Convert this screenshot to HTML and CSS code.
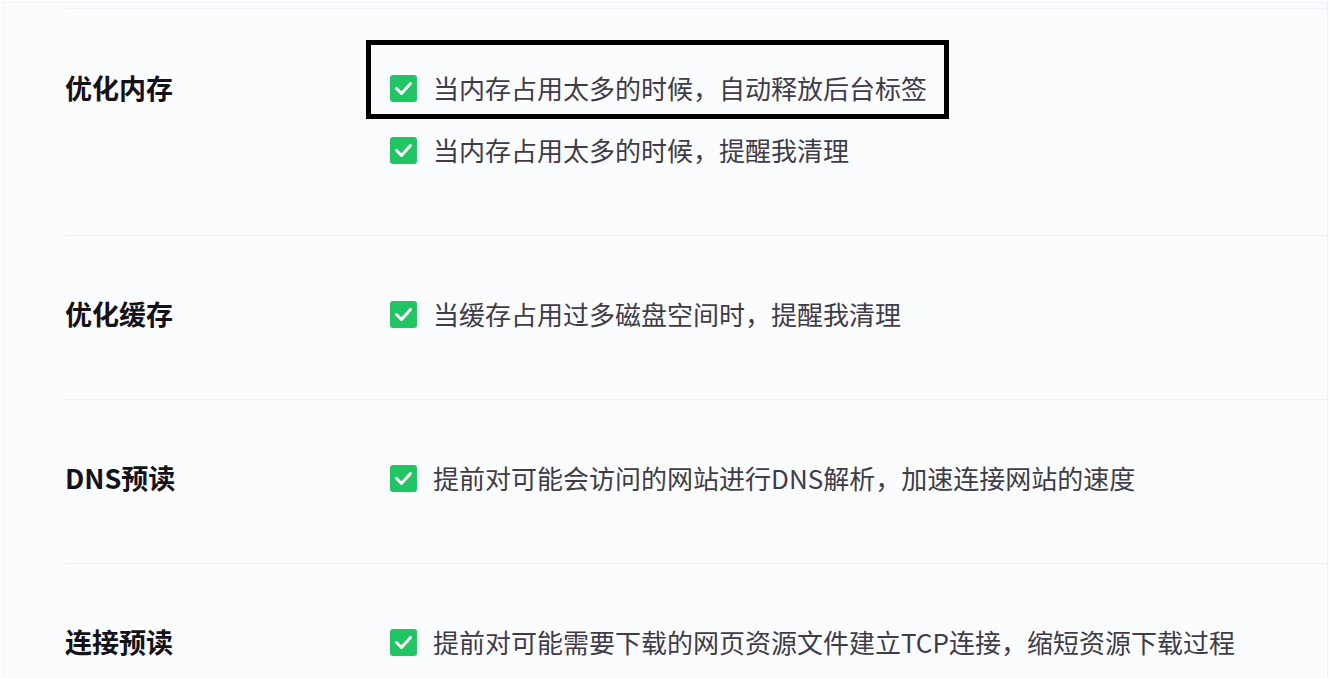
FILE: index.html
```html
<!DOCTYPE html>
<html lang="zh-CN">
<head>
<meta charset="utf-8">
<title>设置</title>
<link rel="stylesheet" href="styles.css">
</head>
<body>
<div class="card">
  <section class="group first">
    <div class="label">优化内存</div>
    <div class="items">
      <div class="item">
        <span class="box-mark"></span>
        <span class="check"><svg viewBox="0 0 27 27" width="27" height="27"><polyline points="6.5,13.5 11.5,18.5 20.5,8.5" fill="none" stroke="#fff" stroke-width="3" stroke-linecap="round" stroke-linejoin="round"/></svg></span>
        <span class="text">当内存占用太多的时候，自动释放后台标签</span>
      </div>
      <div class="item">
        <span class="check"><svg viewBox="0 0 27 27" width="27" height="27"><polyline points="6.5,13.5 11.5,18.5 20.5,8.5" fill="none" stroke="#fff" stroke-width="3" stroke-linecap="round" stroke-linejoin="round"/></svg></span>
        <span class="text">当内存占用太多的时候，提醒我清理</span>
      </div>
    </div>
  </section>
  <section class="group">
    <div class="label">优化缓存</div>
    <div class="items">
      <div class="item">
        <span class="check"><svg viewBox="0 0 27 27" width="27" height="27"><polyline points="6.5,13.5 11.5,18.5 20.5,8.5" fill="none" stroke="#fff" stroke-width="3" stroke-linecap="round" stroke-linejoin="round"/></svg></span>
        <span class="text">当缓存占用过多磁盘空间时，提醒我清理</span>
      </div>
    </div>
  </section>
  <section class="group">
    <div class="label">DNS预读</div>
    <div class="items">
      <div class="item">
        <span class="check"><svg viewBox="0 0 27 27" width="27" height="27"><polyline points="6.5,13.5 11.5,18.5 20.5,8.5" fill="none" stroke="#fff" stroke-width="3" stroke-linecap="round" stroke-linejoin="round"/></svg></span>
        <span class="text">提前对可能会访问的网站进行DNS解析，加速连接网站的速度</span>
      </div>
    </div>
  </section>
  <section class="group">
    <div class="label">连接预读</div>
    <div class="items">
      <div class="item">
        <span class="check"><svg viewBox="0 0 27 27" width="27" height="27"><polyline points="6.5,13.5 11.5,18.5 20.5,8.5" fill="none" stroke="#fff" stroke-width="3" stroke-linecap="round" stroke-linejoin="round"/></svg></span>
        <span class="text">提前对可能需要下载的网页资源文件建立TCP连接，缩短资源下载过程</span>
      </div>
    </div>
  </section>
</div>
</body>
</html>
```

FILE: styles.css
```css
html, body {
  margin: 0;
  padding: 0;
  background: #fdfdfe;
}
body {
  font-family: "Noto Sans CJK SC", "Noto Sans", sans-serif;
  overflow: hidden;
  height: 678px;
  padding-top: 2px;
  box-sizing: border-box;
}
.card {
  margin: 0 2px 0 3px;
  border-top: 1px solid #f0f2f5;
  border-left: 1px solid #f4f5f8;
  border-right: 1px solid #eef0f4;
  padding-top: 5px;
  background: #fbfcfe;
  min-height: 700px;
}
.card > .group:first-child {
  border-top: 1px solid #f1f3f7;
}
.group {
  display: flex;
  margin-left: 61px;
  padding: 58px 0 65px 0;
  border-bottom: 1px solid #eef1f5;
}
.group.first {
  padding-top: 59px;
}
.label {
  width: 325px;
  flex: none;
  font-size: 27px;
  font-weight: 700;
  line-height: 40px;
  color: #141218;
}
.items {
  display: flex;
  flex-direction: column;
  gap: 22px;
}
.item {
  position: relative;
  display: flex;
  align-items: center;
  height: 40px;
  gap: 16px;
}
.check {
  width: 27px;
  height: 27px;
  border-radius: 3px;
  background: #21c563;
  display: flex;
  flex: none;
}
.check svg {
  display: block;
}
.text {
  font-size: 26px;
  line-height: 40px;
  color: #403b47;
  white-space: nowrap;
}
.box-mark {
  position: absolute;
  left: -24px;
  top: -28px;
  width: 583px;
  height: 79px;
  border: 5px solid #000;
  box-sizing: border-box;
  pointer-events: none;
}
```
